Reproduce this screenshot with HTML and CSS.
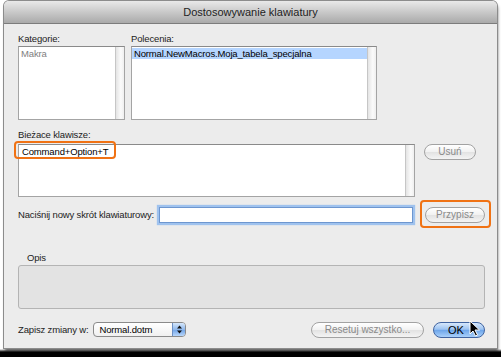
FILE: index.html
```html
<!DOCTYPE html>
<html lang="pl">
<head>
  <meta charset="UTF-8" />
  <title>Dostosowywanie klawiatury</title>
  <link rel="stylesheet" href="styles.css">
</head>
<body>

<div class="window">
  <div class="titlebar">Dostosowywanie klawiatury</div>

  <div class="content">
    <div class="lists">
      <div class="col col-cat">
        <div class="label">Kategorie:</div>
        <div class="listbox">
          <div class="items">
            <div class="item dim">Makra</div>
          </div>
          <div class="scroll"></div>
        </div>
      </div>
      <div class="col col-cmd">
        <div class="label">Polecenia:</div>
        <div class="listbox">
          <div class="items">
            <div class="item selected">Normal.NewMacros.Moja_tabela_specjalna</div>
          </div>
          <div class="scroll"></div>
        </div>
      </div>
    </div>

    <div class="label keys-label">Bieżace klawisze:</div>
    <div class="keys-row">
      <div class="listbox keys">
        <div class="items">
          <div class="item keys-item">Command+Option+T</div>
        </div>
        <div class="scroll"></div>
      </div>
      <button class="btn btn-remove" disabled>Usuń</button>
    </div>

    <div class="assign-row">
      <span class="label">Naciśnij nowy skrót klawiaturowy:</span>
      <div class="input"></div>
      <button class="btn btn-assign" disabled>Przypisz</button>
    </div>

    <div class="label desc-label">Opis</div>
    <div class="desc"></div>

    <div class="bottom-row">
      <span class="label">Zapisz zmiany w:</span>
      <div class="select">
        <span class="select-text">Normal.dotm</span>
        <span class="stepper">
          <svg width="5" height="9" viewBox="0 0 5 9">
            <path d="M2.5 0.5 L5 3.5 L0 3.5 Z" fill="#111"/>
            <path d="M0 5.5 L5 5.5 L2.5 8.5 Z" fill="#111"/>
          </svg>
        </span>
      </div>
      <div class="spacer"></div>
      <button class="btn btn-reset" disabled>Resetuj wszystko...</button>
      <button class="btn btn-ok">OK</button>
    </div>
  </div>

  <div class="mark mark-keys"></div>
  <div class="mark mark-assign"></div>

  <svg class="cursor" width="12" height="17" viewBox="0 0 12 17">
    <path d="M1 1 L1 14 L4 11 L6.5 16 L8.5 15 L6 10 L10.5 10 Z" fill="#000" stroke="#fff" stroke-width="1"/>
  </svg>
</div>

</body>
</html>
```

FILE: styles.css
```css
body {
  margin: 0;
  width: 501px;
  height: 357px;
  overflow: hidden;
  background: linear-gradient(to bottom, #fff 0, #fff 349px, #000 352px);
  font-family: "Liberation Sans", Arial, sans-serif;
  font-size: 9.5px;
  letter-spacing: -0.15px;
  color: #222;
}

.window {
  position: relative;
  margin: 1px 0 0 4px;
  width: 493px;
  height: 347px;
  background-color: #ececec;
  border-radius: 5px 5px 0 0;
  box-shadow: 0 0 0 1px #8c8c8c, 1px 3px 3px rgba(0, 0, 0, 0.55);
}

.titlebar {
  height: 22px;
  line-height: 22px;
  text-align: center;
  font-size: 11px;
  letter-spacing: 0;
  color: #1e1e1e;
  border-radius: 5px 5px 0 0;
  border-bottom: 1px solid #7c7c7c;
  background: linear-gradient(to bottom, #e9e9e9, #c9c9c9 50%, #aaaaaa);
}

.content {
  padding: 0 12px 0 14px;
}

.label {
  height: 13px;
  line-height: 13px;
  color: #222;
  white-space: nowrap;
  flex-shrink: 0;
}

.lists {
  display: flex;
  gap: 6px;
  margin-top: 8px;
}

.col-cat {
  width: 107px;
}

.col-cmd {
  width: 246px;
}

.col .label {
  margin-bottom: 1px;
}

.listbox {
  display: flex;
  height: 74px;
  background-color: #fff;
  border: 1px solid #a4a4a4;
  border-top-color: #8a8a8a;
  box-sizing: border-box;
}

.items {
  flex: 1;
  padding-top: 1px;
}

.item {
  height: 11px;
  line-height: 11px;
  padding-left: 2px;
  white-space: nowrap;
}

.dim {
  color: #808080;
}

.selected {
  background-color: #b5d5ff;
  color: #000;
}

.scroll {
  width: 8px;
  border-left: 1px solid #c6c6c6;
  background: linear-gradient(to right, #e4e4e4, #fbfbfb 60%, #efefef);
}

.keys-label {
  margin-top: 8px;
  margin-bottom: 3px;
}

.keys-row {
  display: flex;
  align-items: flex-start;
  gap: 9px;
}

.keys {
  width: 397px;
  height: 53px;
}

.keys-item {
  height: 12px;
  line-height: 12px;
  padding-left: 3px;
  font-size: 9.5px;
  color: #000;
}

.btn {
  height: 16px;
  padding: 0;
  border: 1px solid #a2a2a2;
  border-radius: 8px;
  background: linear-gradient(to bottom, #ffffff, #f1f1f1 50%, #e2e2e2 51%, #f4f4f4);
  font-family: "Liberation Sans", Arial, sans-serif;
  font-size: 10px;
  color: #8a8a8a;
  line-height: 14px;
  text-align: center;
  flex-shrink: 0;
}

.btn-remove {
  width: 52px;
}

.assign-row {
  display: flex;
  align-items: center;
  margin-top: 9px;
  height: 17px;
}

.input {
  flex: 1;
  height: 14px;
  margin-left: 5px;
  background-color: #fff;
  border: 1px solid #6d96cf;
  box-shadow: 0 0 1px 2px #9fc2ee;
}

.btn-assign {
  width: 60px;
  margin-left: 12px;
}

.desc-label {
  margin-top: 28px;
  padding-left: 9px;
  margin-bottom: 1px;
}

.desc {
  width: 467px;
  height: 44px;
  box-sizing: border-box;
  background-color: #e3e3e3;
  border: 1px solid #b4b4b4;
  border-radius: 3px;
}

.bottom-row {
  display: flex;
  align-items: center;
  margin-top: 12px;
  height: 17px;
}

.select {
  display: flex;
  width: 93px;
  height: 15px;
  margin-left: 5px;
  box-sizing: border-box;
  border: 1px solid #8a8a8a;
  border-radius: 4px;
  background: linear-gradient(to bottom, #fff, #f0f0f0);
  overflow: hidden;
}

.select-text {
  flex: 1;
  padding-left: 5px;
  line-height: 13px;
  color: #000;
}

.stepper {
  width: 12px;
  display: flex;
  align-items: center;
  justify-content: center;
  border-left: 1px solid #6b8fc4;
  background: linear-gradient(to bottom, #d6e7fb, #8fb8ec 50%, #6ea2e6 51%, #b9d7fb);
}

.spacer {
  flex: 1;
}

.btn-reset {
  width: 113px;
}

.btn-ok {
  width: 52px;
  margin-left: 9px;
  padding-right: 6px;
  border-color: #3f63a0;
  color: #000;
  font-size: 11px;
  background: linear-gradient(to bottom, #d7e8fc, #9cc3f1 45%, #6ea6ea 52%, #a9d0fb);
}

.mark {
  position: absolute;
  border: 2px solid #f07214;
  border-radius: 4px;
  box-sizing: border-box;
}

.mark-keys {
  left: 10px;
  top: 140px;
  width: 102px;
  height: 18px;
}

.mark-assign {
  left: 416px;
  top: 199px;
  width: 71px;
  height: 28px;
}

.cursor {
  position: absolute;
  left: 465px;
  top: 319px;
}
```
